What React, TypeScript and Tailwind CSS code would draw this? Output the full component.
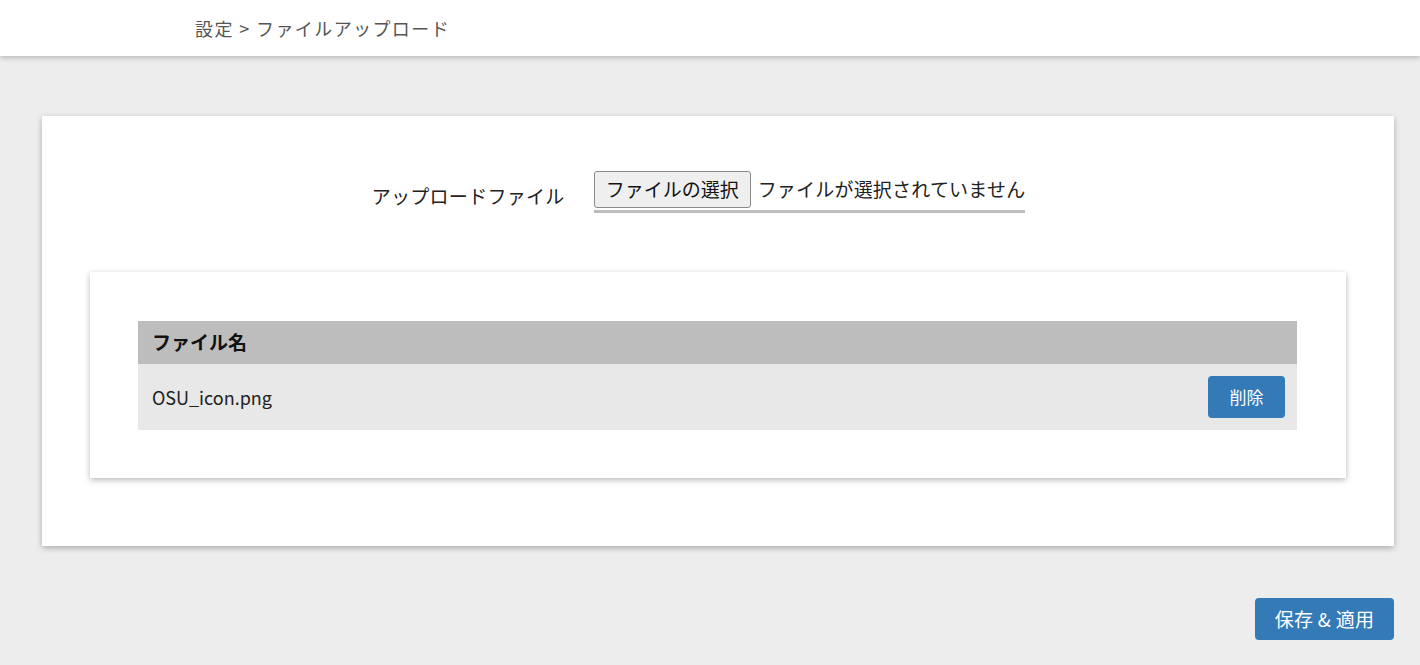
export default function App() {
  const font = { fontFamily: '"Noto Sans CJK JP", "Noto Sans", sans-serif' };
  return (
    <div className="min-h-[665px] w-full bg-[#ededed] flex flex-col" style={font}>
      <header className="h-[56px] bg-white shadow-[0_2px_5px_rgba(0,0,0,0.22)] flex items-center pl-[195px] relative z-10">
        <span className="text-[18px] text-[#555] tracking-[1.4px] whitespace-pre">設定 &gt; ファイルアップロード</span>
      </header>
      <main className="flex flex-col pl-[42px] pr-[26px] pt-[60px]">
        <section className="bg-white h-[430px] shadow-[0_2px_6px_rgba(0,0,0,0.28)] flex flex-col">
          <div className="flex justify-center pr-[39px] pt-[55px] h-[156px]">
            <div className="flex items-start">
              <span className="text-[19px] text-[#222] mt-[11px] mr-[29px] tracking-[0.3px]">アップロードファイル</span>
              <div className="flex flex-col">
                <div className="flex items-center">
                  <div className="h-[37px] px-[11px] border border-[#8a8a8a] rounded-[3px] bg-[#efefef] flex items-center text-[19px] text-[#111]">ファイルの選択</div>
                  <span className="ml-[7px] text-[19px] text-[#222] tracking-[0.2px]">ファイルが選択されていません</span>
                </div>
                <div className="h-[3px] bg-[#bdbdbd] mt-[2px]" />
              </div>
            </div>
          </div>
          <div className="mx-[48px] h-[206px] bg-white shadow-[0_2px_6px_rgba(0,0,0,0.28)] pt-[49px] pl-[48px] pr-[49px]">
            <div className="flex flex-col">
              <div className="h-[43px] bg-[#bdbdbd] flex items-center pl-[14px] text-[19px] font-bold text-[#111]">ファイル名</div>
              <div className="h-[66px] bg-[#e8e8e8] flex items-center justify-between pl-[14px] pr-[12px]">
                <span className="text-[18px] text-[#222]">OSU_icon.png</span>
                <button className="w-[77px] h-[42px] rounded-[4px] bg-[#337ab7] text-white text-[17px] flex items-center justify-center">削除</button>
              </div>
            </div>
          </div>
        </section>
        <div className="flex justify-end pt-[52px]">
          <button className="w-[139px] h-[42px] rounded-[4px] bg-[#337ab7] text-white text-[19px] flex items-center justify-center whitespace-pre tracking-[0.3px]">保存 &amp; 適用</button>
        </div>
      </main>
    </div>
  );
}
